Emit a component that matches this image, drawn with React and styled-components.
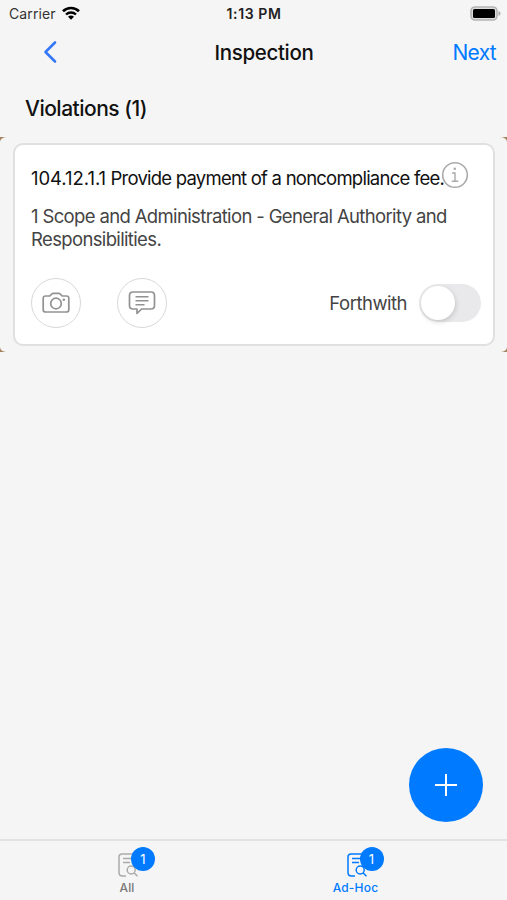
import React, { useState } from 'react';
import styled, { createGlobalStyle } from 'styled-components';

const BLUE = '#007aff';

const GlobalStyle = createGlobalStyle`
  * {
    box-sizing: border-box;
  }
  body {
    margin: 0;
    background: #f5f5f5;
    font-family: Inter, 'Liberation Sans', sans-serif;
  }
  button {
    margin: 0;
    padding: 0;
    border: 0;
    background: none;
    font-family: inherit;
    color: inherit;
  }
  svg {
    display: block;
  }
`;

const Screen = styled.div`
  display: flex;
  flex-direction: column;
  width: 507px;
  height: 900px;
  overflow: hidden;
  background: #f5f5f5;
`;

const StatusBar = styled.div`
  display: grid;
  grid-template-columns: 1fr auto 1fr;
  align-items: center;
  height: 27px;
  padding: 0 6px 0 9px;
  color: #222;
`;
const Carrier = styled.div`
  display: flex;
  align-items: center;
  gap: 6px;
  font-size: 14px;
  letter-spacing: 0.1px;
  color: #333;
`;
const Clock = styled.span`
  margin-left: -2px;
  font-size: 14px;
  font-weight: 600;
  letter-spacing: 0.6px;
`;
const Battery = styled.div`
  justify-self: end;
`;

const NavBar = styled.header`
  display: grid;
  grid-template-columns: 1fr auto 1fr;
  align-items: center;
  height: 50px;
  padding: 0 11px 0 43px;
`;
const BackButton = styled.button`
  justify-self: start;
`;
const NavTitle = styled.h1`
  margin: 1px 0 0 -11px;
  font-size: 20.5px;
  font-weight: 500;
  letter-spacing: -0.35px;
  color: #111;
`;
const NextButton = styled.button`
  justify-self: end;
  font-size: 21px;
  letter-spacing: -0.7px;
  color: ${BLUE};
`;

const SectionTitle = styled.h2`
  height: 60px;
  margin: 0;
  padding-left: 25px;
  font-size: 21px;
  line-height: 64px;
  font-weight: 500;
  letter-spacing: -0.5px;
  color: #111;
`;

const CardRow = styled.div`
  height: 215px;
  background: #a5835f;
`;
const CardRowInner = styled.div`
  height: 215px;
  padding: 6px 12px 6px 13px;
  border-radius: 7px 7px 6px 6px / 5px;
  background: #f5f5f5;
`;
const Card = styled.article`
  position: relative;
  height: 203px;
  padding: 21px 12px 0 16px;
  border: 2px solid #e0e0e0;
  border-radius: 10px;
  background: #fff;
`;
const CardTitle = styled.h3`
  margin: 0;
  font-size: 18.5px;
  line-height: 24px;
  font-weight: 400;
  letter-spacing: -0.77px;
  white-space: nowrap;
  color: #111;
`;
const CodeNumber = styled.span`
  letter-spacing: -0.05px;
`;
const CardText = styled.p`
  margin: 15px 0 0;
  font-size: 18.5px;
  line-height: 23px;
  letter-spacing: -0.64px;
  white-space: nowrap;
  color: #444;
`;
const InfoButton = styled.button`
  position: absolute;
  top: 16px;
  right: 24px;
`;
const CardActions = styled.div`
  display: flex;
  align-items: center;
  margin-top: 27px;
`;
const RoundButton = styled.button`
  display: flex;
  align-items: center;
  justify-content: center;
  width: 50px;
  height: 50px;
  margin-right: 35px;
  border: 1.5px solid #d8d8d8;
  border-radius: 50%;

  &:first-child {
    margin-right: 36px;
  }
`;
const ToggleLabel = styled.span`
  margin-left: auto;
  font-size: 18.5px;
  letter-spacing: -0.5px;
  color: #444;
`;
const Toggle = styled.button`
  width: 62px;
  height: 38px;
  margin-left: 12px;
  padding: 2px;
  border-radius: 19px;
  background: ${({ $on }) => ($on ? '#34c759' : '#e9e9eb')};
`;
const Knob = styled.span`
  display: block;
  width: 34px;
  height: 34px;
  margin-left: ${({ $on }) => ($on ? '24px' : '0')};
  border-radius: 50%;
  background: #fff;
  box-shadow: 1px 2px 5px rgba(0, 0, 0, 0.15);
`;

const Body = styled.main`
  display: flex;
  flex: 1;
  align-items: flex-end;
  justify-content: flex-end;
  padding: 0 24px 17px 0;
`;
const AddButton = styled.button`
  display: flex;
  align-items: center;
  justify-content: center;
  width: 74px;
  height: 74px;
  border-radius: 50%;
  background: ${BLUE};
`;

const TabBar = styled.nav`
  display: grid;
  grid-template-columns: 254px 203px;
  height: 61px;
  border-top: 2px solid #e2e2e2;
`;
const Tab = styled.button`
  display: flex;
  flex-direction: column;
  align-items: center;
  padding-top: 12px;
  color: ${({ $active }) => ($active ? BLUE : '#aaa')};
`;
const TabIcon = styled.span`
  position: relative;
  height: 26px;
  margin-left: 2px;
`;
const Badge = styled.span`
  position: absolute;
  top: -6px;
  left: 13px;
  width: 24px;
  height: 24px;
  border-radius: 50%;
  background: ${BLUE};
  color: #fff;
  font-size: 13px;
  line-height: 24px;
  text-align: center;
`;
const TabLabel = styled.span`
  font-size: 12px;
  line-height: 18px;
  font-weight: 500;
  letter-spacing: 0.2px;
  color: ${({ $active }) => ($active ? BLUE : '#777')};
`;

const WifiIcon = () => (
  <svg width="18" height="15" viewBox="0 0 18 15" fill="none" stroke="#000">
    <path d="M1 5.2C5.4.9 12.6.9 17 5.2" strokeWidth="2.6" />
    <path d="M4 8.5c2.8-2.7 7.2-2.7 10 0" strokeWidth="2.4" />
    <path d="M6 10.8c1.7-1.6 4.3-1.6 6 0l-3 3z" fill="#000" stroke="none" />
  </svg>
);

const BatteryIcon = () => (
  <svg width="31" height="15" viewBox="0 0 31 15">
    <rect x="1" y="1" width="26" height="13" rx="4" fill="#ddd" stroke="#b4b4b4" strokeWidth="1.6" />
    <rect x="3" y="3" width="22" height="9" rx="1.5" fill="#000" />
    <path d="M28.5 5c2.7 1 2.7 4 0 5z" fill="#aaa" />
  </svg>
);

const BackIcon = () => (
  <svg width="14" height="24" viewBox="0 0 14 24" fill="none">
    <path d="M12 2.5 2.5 12l9.5 9.5" stroke="#3478f6" strokeWidth="2.6" strokeLinecap="round" strokeLinejoin="round" />
  </svg>
);

const InfoIcon = () => (
  <svg width="28" height="28" viewBox="0 0 28 28" fill="none" stroke="#aaa">
    <circle cx="14" cy="14" r="12.3" strokeWidth="1.6" />
    <path d="M11 12h3v8M10.7 20.2h6.6" strokeWidth="1.4" />
    <circle cx="13.8" cy="7.7" r="1.3" fill="#aaa" stroke="none" />
  </svg>
);

const CameraIcon = () => (
  <svg width="28" height="22" viewBox="0 0 28 22" fill="none" stroke="#929292" strokeWidth="1.7">
    <path d="M3.5 4h4c1.3 0 1.8-2.7 3.5-2.7h6c1.7 0 2.2 2.7 3.5 2.7h4a2.3 2.3 0 0 1 2.3 2.3v11.4a2.3 2.3 0 0 1-2.3 2.3h-21a2.3 2.3 0 0 1-2.3-2.3V6.3A2.3 2.3 0 0 1 3.5 4z" />
    <circle cx="14" cy="11.5" r="5.3" />
    <circle cx="21.8" cy="7.7" r="1.3" fill="#929292" stroke="none" />
  </svg>
);

const CommentIcon = () => (
  <svg width="28" height="26" viewBox="0 0 28 26" fill="none" stroke="#929292" strokeWidth="1.7">
    <path d="M5 2h18c2 0 3.5 1.5 3.5 3.5v10c0 2-1.5 3.5-3.5 3.5h-9.5L9 23.5V19H5c-2 0-3.5-1.5-3.5-3.5v-10C1.5 3.5 3 2 5 2z" strokeLinejoin="round" />
    <path d="M7.5 6.7h13M7.5 10.700h13M7.5 14.700h9" strokeWidth="1.4" />
  </svg>
);

const PlusIcon = () => (
  <svg width="22" height="22" viewBox="0 0 22 22" stroke="#fff" strokeWidth="2">
    <path d="M11 0v22M0 11h22" />
  </svg>
);

const DocSearchIcon = () => (
  <svg width="20" height="24" viewBox="0 0 20 24" fill="none" stroke="currentColor" strokeWidth="1.5">
    <path d="M8 23H4.500C2 23 1 22 1 19.500V4c0-2 1-3 3-3h13v11M5 5.500h10M5 9.500h7" />
    <circle cx="13.200" cy="17" r="4" />
    <path d="m16.200 20 3.300 3.300" />
  </svg>
);

const tabs = [
  { id: 'all', label: 'All', count: 1 },
  { id: 'adhoc', label: 'Ad-Hoc', count: 1 },
];

const App = () => {
  const [forthwith, setForthwith] = useState(false);
  const [activeTab, setActiveTab] = useState('adhoc');

  return (
    <>
      <GlobalStyle />
      <Screen>
        <StatusBar>
          <Carrier>
            Carrier
            <WifiIcon />
          </Carrier>
          <Clock>1:13 PM</Clock>
          <Battery>
            <BatteryIcon />
          </Battery>
        </StatusBar>
        <NavBar>
          <BackButton aria-label="Back">
            <BackIcon />
          </BackButton>
          <NavTitle>Inspection</NavTitle>
          <NextButton>Next</NextButton>
        </NavBar>
        <SectionTitle>Violations (1)</SectionTitle>
        <CardRow>
          <CardRowInner>
            <Card>
              <CardTitle>
                <CodeNumber>104.12.1.1</CodeNumber> Provide payment of a noncompliance fee.
              </CardTitle>
              <InfoButton aria-label="Info">
                <InfoIcon />
              </InfoButton>
              <CardText>
                1 Scope and Administration - General Authority and
                <br />
                Responsibilities.
              </CardText>
              <CardActions>
                <RoundButton aria-label="Photo">
                  <CameraIcon />
                </RoundButton>
                <RoundButton aria-label="Comment">
                  <CommentIcon />
                </RoundButton>
                <ToggleLabel>Forthwith</ToggleLabel>
                <Toggle $on={forthwith} onClick={() => setForthwith(!forthwith)} aria-label="Forthwith">
                  <Knob $on={forthwith} />
                </Toggle>
              </CardActions>
            </Card>
          </CardRowInner>
        </CardRow>
        <Body>
          <AddButton aria-label="Add">
            <PlusIcon />
          </AddButton>
        </Body>
        <TabBar>
          {tabs.map(({ id, label, count }) => (
            <Tab key={id} $active={id === activeTab} onClick={() => setActiveTab(id)}>
              <TabIcon>
                <DocSearchIcon />
                <Badge>{count}</Badge>
              </TabIcon>
              <TabLabel $active={id === activeTab}>{label}</TabLabel>
            </Tab>
          ))}
        </TabBar>
      </Screen>
    </>
  );
};

export default App;
